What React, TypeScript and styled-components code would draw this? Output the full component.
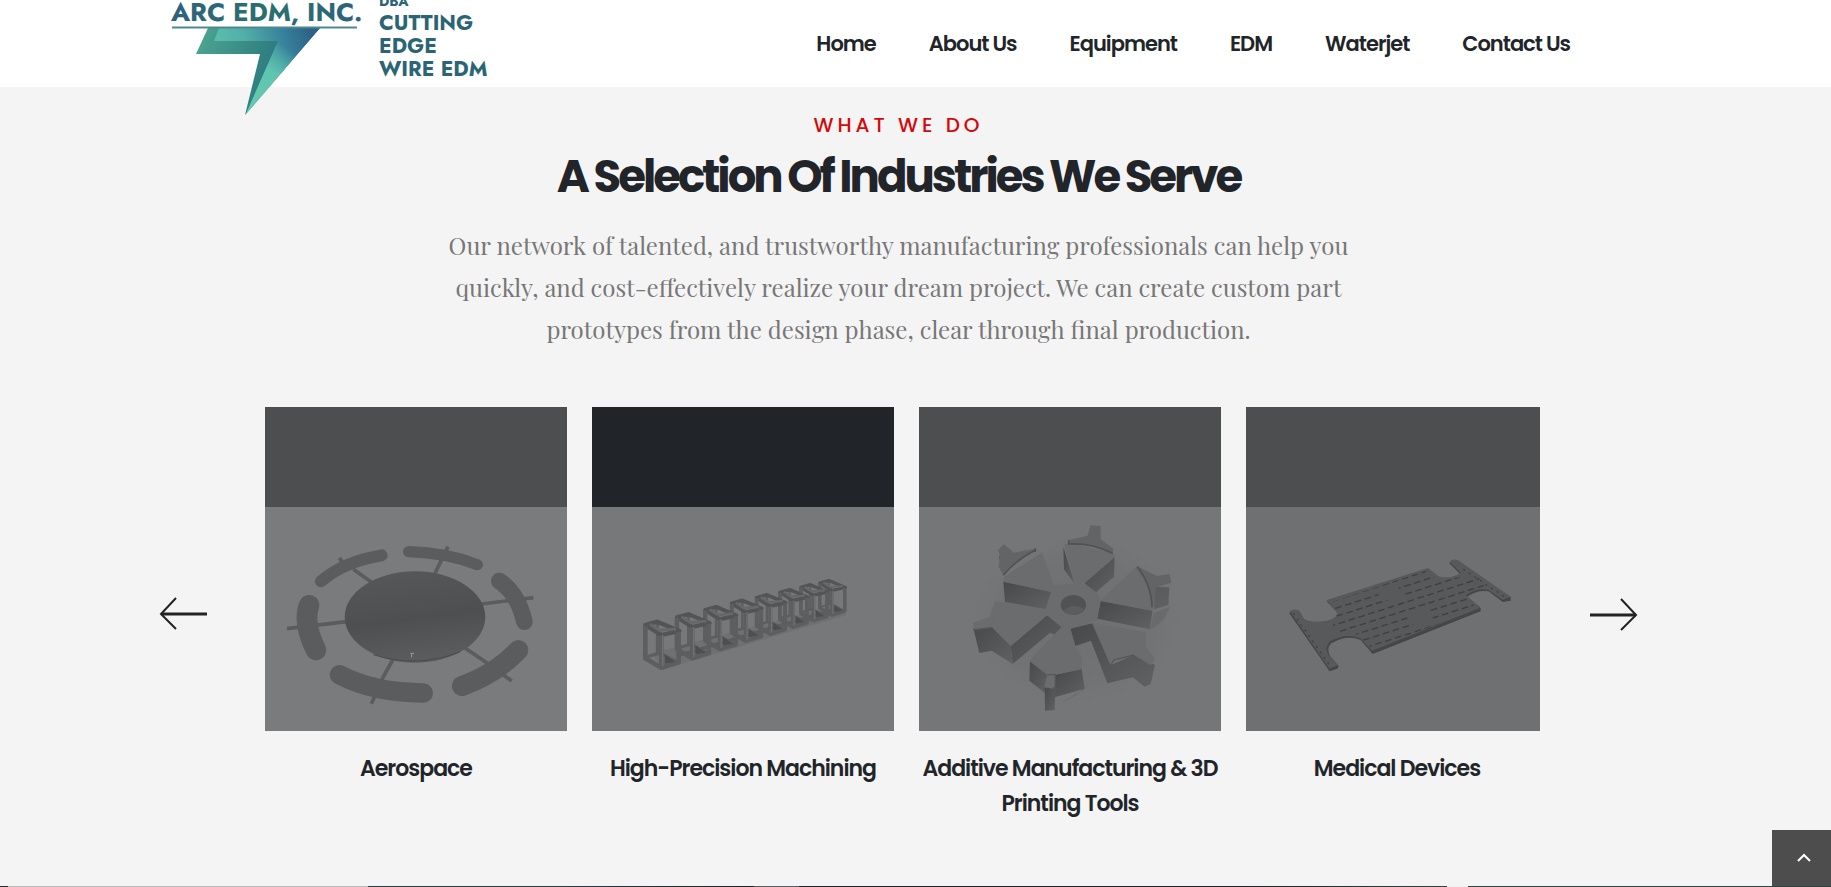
import React from "react";
import styled, { createGlobalStyle } from "styled-components";

const GlobalStyle = createGlobalStyle`
  *, *::before, *::after { box-sizing: border-box; }
  body {
    margin: 0;
    background: #f4f4f4;
    color: #212529;
    font-family: Poppins, Inter, "Liberation Sans", sans-serif;
    overflow-x: hidden;
  }
`;

const Header = styled.header`
  position: relative;
  z-index: 2;
  height: 87px;
  padding-right: 34px;
  background: #fff;
`;

const HeaderInner = styled.div`
  display: flex;
  align-items: flex-start;
  justify-content: space-between;
  max-width: 1479px;
  height: 100%;
  margin: 0 auto;
`;

const LogoLink = styled.a`
  flex: none;
  width: 340px;
  height: 120px;
  svg { display: block; }
`;

const Nav = styled.nav`
  display: flex;
  gap: 53px;
  padding-right: 68px;
`;

const NavLink = styled.a`
  color: #212529;
  font-size: 21px;
  font-weight: 600;
  line-height: 88px;
  letter-spacing: -1px;
  text-decoration: none;
  white-space: nowrap;
`;

const Section = styled.section`
  padding: 23px 34px 65px 0;
`;

const Intro = styled.div`
  max-width: 930px;
  margin: 0 auto;
  text-align: center;
`;

const Eyebrow = styled.p`
  margin: 0;
  color: #d30a0a;
  font-size: 20px;
  font-weight: 500;
  line-height: 30px;
  letter-spacing: 4px;
  text-transform: uppercase;
`;

const Heading = styled.h2`
  margin: 10px 0 0;
  font-size: 45px;
  font-weight: 700;
  line-height: 54px;
  letter-spacing: -3px;
`;

const Lead = styled.p`
  margin: 20px 0 0;
  color: #777;
  font-family: "Playfair Display", "Liberation Serif", serif;
  font-size: 24px;
  line-height: 42px;
`;

const Carousel = styled.div`
  display: flex;
  align-items: center;
  max-width: 1479px;
  margin: 57px auto 0;
`;

const ArrowButton = styled.button`
  flex: none;
  display: block;
  width: 48px;
  height: 34px;
  padding: 0;
  border: 0;
  background: none;
  cursor: pointer;
  svg { display: block; }
`;

const Track = styled.ul`
  flex: 1;
  display: flex;
  gap: 25px;
  min-width: 0;
  margin: 0 50px 0 58px;
  padding: 0;
  overflow: hidden;
  list-style: none;
`;

const Slide = styled.li`
  flex: 0 0 calc((100% - 67px) / 4);
`;

const Frame = styled.div<{ $active?: boolean }>`
  padding-top: 100px;
  background: ${(p) => (p.$active ? "#212529" : "#4d4e50")};
  svg { display: block; width: 100%; height: 224px; }
`;

const SlideTitle = styled.h3`
  margin: 20px 0 0;
  font-size: 22px;
  font-weight: 600;
  line-height: 35px;
  letter-spacing: -1px;
  text-align: center;
`;

const Gallery = styled.section`
  height: 1px;
  background: linear-gradient(
    to right,
    #222d30 8px, #b9b9b9 8px 368px, #2b3c40 368px 560px, #1f2022 754px,
    #595d62 754px 799px, #202226 799px 1250px, #33413f 1447px,
    #f0f0f0 1447px 1468px, #33413f 1468px
  );
`;

const TopButton = styled.button`
  position: fixed;
  right: 0;
  bottom: 1px;
  display: flex;
  align-items: center;
  justify-content: center;
  width: 59px;
  height: 56px;
  padding: 0 0 0 4px;
  border: 0;
  background: #4d4d4d;
  cursor: pointer;
`;

function Logo() {
  return (
    <svg width="340" height="120" viewBox="159 0 340 120" aria-hidden="true">
      <defs>
        <linearGradient id="ink" x1="0" x2="1">
          <stop offset="0" stopColor="#2d6180" />
          <stop offset=".5" stopColor="#2b706d" />
          <stop offset="1" stopColor="#2d6180" />
        </linearGradient>
        <linearGradient id="light" gradientUnits="userSpaceOnUse" x1="214" y1="60" x2="310" y2="30">
          <stop offset="0" stopColor="#5cc0ae" />
          <stop offset=".35" stopColor="#52b0a8" />
          <stop offset=".75" stopColor="#367f9a" />
          <stop offset="1" stopColor="#2c6288" />
        </linearGradient>
        <linearGradient id="tip" gradientUnits="userSpaceOnUse" x1="290" y1="50" x2="250" y2="110">
          <stop offset="0" stopColor="#5fc5b0" stopOpacity="0" />
          <stop offset=".4" stopColor="#5fc5b0" />
          <stop offset="1" stopColor="#66c9b0" />
        </linearGradient>
        <linearGradient id="dark" gradientUnits="userSpaceOnUse" x1="200" y1="40" x2="275" y2="60">
          <stop offset="0" stopColor="#4ba38f" />
          <stop offset="1" stopColor="#2e7b80" />
        </linearGradient>
      </defs>
      <path d="M208 28H320L245 115L260 54H196Z" fill="url(#dark)" />
      <path d="M219 28H320L246 114L278 41H214Z" fill="url(#light)" />
      <path d="M278 41L300 51L246 114Z" fill="url(#tip)" />
      <path d="M172 27.5H357" stroke="#4f8790" strokeWidth="2" />
      <g fill="url(#ink)" fontFamily="Jost, Lato, sans-serif" fontWeight="700">
        <text x="171" y="21" fontSize="26">ARC EDM, INC.</text>
        <g fontSize="21" fill="#2b6575">
          <text x="379" y="6" fontSize="14">DBA</text>
          <text x="379" y="30">CUTTING</text>
          <text x="379" y="53">EDGE</text>
          <text x="379" y="76">WIRE EDM</text>
        </g>
      </g>
    </svg>
  );
}

function AerospacePart() {
  return (
    <svg viewBox="375 321 906 672" preserveAspectRatio="xMidYMid slice" role="img" aria-label="Disc with six curved arms">
      <defs>
        <linearGradient id="disc" x1="0" y1="0" x2="0.2" y2="1">
          <stop offset="0" stopColor="#565859" />
          <stop offset=".6" stopColor="#4e4f50" />
          <stop offset="1" stopColor="#5a5b5c" />
        </linearGradient>
      </defs>
      <path d="M375 321H1281V993H375Z" fill="#7a7b7c" />
      <g stroke="#5a5c5d" strokeWidth="11" fill="none">
        <path d="M441 686L620 665M598 474L612 492M640 508L695 547M924 440L884 522M1025 612L1180 593M975 744L1050 795M1090 825L1115 843M758 780L722 845M706 885L694 911" />
      </g>
      <g stroke="#5a5c5d" fill="none" strokeLinecap="round">
        <path d="M543 544Q610 485 725 466" strokeWidth="36" />
        <path d="M806 455Q920 458 1012 494" strokeWidth="34" />
        <path d="M1078 543Q1134 580 1153 665" strokeWidth="50" />
        <path d="M1135 750Q1070 820 966 858" strokeWidth="60" />
        <path d="M598 824Q700 878 850 879" strokeWidth="58" />
        <path d="M507 616Q488 670 528 750" strokeWidth="62" />
      </g>
      <ellipse cx="825" cy="651" rx="211" ry="137" fill="url(#disc)" />
      <path d="M700 764Q830 806 960 756" stroke="#4a4b4c" strokeWidth="3" fill="none" />
      <path d="M811 760H822M815 762V772" stroke="#999" strokeWidth="3" />
    </svg>
  );
}

const cageFrames = [
  [190, 675, 1], [285, 652, 0.96], [370, 630, 0.92], [450, 610, 0.88],
  [525, 593, 0.85], [595, 577, 0.81], [658, 562, 0.78], [715, 549, 0.75],
];

function MachinedPart() {
  return (
    <svg viewBox="36 321 906 672" preserveAspectRatio="xMidYMid slice" role="img" aria-label="Row of open machined cages">
      <path d="M36 321H942V993H36Z" fill="#777879" />
      <path d="M250 808L800 645L770 615L215 760Z" fill="#6e7071" />
      <path d="M300 765L775 625" stroke="#5b5d5e" strokeWidth="10" />
      <g fill="none" strokeLinejoin="round">
        {[...cageFrames].reverse().map(([x, y, s]) => (
          <g key={x} transform={`translate(${x} ${y}) scale(${s})`}>
            <path d="M8 96L50 84L104 112M42 -8V84" stroke="#5c5e5f" strokeWidth="9" />
            <path d="M6 0L42 -10L108 18L54 30Z" stroke="#525455" strokeWidth="13" />
            <path d="M20 -2L48 16L98 12" stroke="#66686a" strokeWidth="9" />
            <path d="M6 2V100L54 128L106 112V20M54 32V128" stroke="#5c5e5f" strokeWidth="14" />
            <path d="M64 88L96 110L64 116Z" fill="#4c4e4f" />
            <path d="M58 30V124" stroke="#707273" strokeWidth="4" />
          </g>
        ))}
      </g>
    </svg>
  );
}

function AdditivePart() {
  return (
    <svg viewBox="27 321 906 672" preserveAspectRatio="xMidYMid slice" role="img" aria-label="Hub with seven wedge blades">
      <defs>
        <linearGradient id="side" x1="0" y1="0" x2="1" y2="1">
          <stop offset="0" stopColor="#48494a" />
          <stop offset="1" stopColor="#606162" />
        </linearGradient>
        <radialGradient id="shade">
          <stop offset="0" stopColor="#5f6061" />
          <stop offset=".7" stopColor="#6a6b6c" />
          <stop offset="1" stopColor="#757677" stopOpacity="0" />
        </radialGradient>
      </defs>
      <path d="M27 321H933V993H27Z" fill="#757677" />
      <ellipse cx="500" cy="660" rx="340" ry="270" fill="url(#shade)" opacity=".3" />
      <path d="M730 640L780 620L760 660L722 690ZM520 870L535 850L500 885L440 915Z" fill="#686a6b" />
      <g fill="url(#side)">
        <path d="M280 545L424 575L407 628L285 606Z" />
        <path d="M523 550L614 470L612 530L556 578Z" />
        <path d="M460 440L494 552L462 508Z" />
        <path d="M572 603L727 632L720 688L562 656Z" />
        <path d="M411 646L460 682L440 706L420 698L308 792L302 738Z" />
        <path d="M190 685L245 680L302 738L308 792L245 752L208 759Z" />
        <path d="M480 686L548 670L602 795L672 765L735 795L722 852L704 860L668 832L592 850L543 722L496 738Z" />
        <path d="M360 784L412 824L404 878L358 842Z" />
        <path d="M436 824L515 808L524 866L434 892Z" />
        <path d="M404 860L436 862L434 930L405 932Z" />
        <path d="M266 468L300 490L282 520ZM735 560L778 562L775 615L732 628Z" />
      </g>
      <g fill="#6a6c6d">
        <path d="M430 555L522 550L562 578L572 603L560 660L482 686L455 682L411 646L407 628L424 575Z" />
        <path d="M282 530L396 458L434 562L424 576L280 545Z" />
        <path d="M462 434L480 430L610 458L614 472L523 550L496 552Z" />
        <path d="M570 602L672 506L684 500L722 560L727 632Z" />
        <path d="M256 603L411 628L411 646L302 738L245 680L240 648Z" />
        <path d="M188 668L238 652L256 603L262 612L247 682L194 690Z" />
        <path d="M460 676L482 688L496 738L516 770L515 806L436 824L428 866L402 862L412 824L358 782Z" />
        <path d="M546 670L708 696L706 738L735 776L722 796L672 765L612 780L602 796Z" />
      </g>
      <g fill="#626465">
        <path d="M264 450L282 433L312 458L376 446L374 454Q320 480 280 526L266 500L270 468Z" />
        <path d="M476 420L532 408L542 376L572 378L572 418L610 446L608 460Q545 430 476 434Z" />
        <path d="M680 498L740 528L778 522L784 548L738 562L728 632Q724 560 680 506Z" />
      </g>
      <g fill="none" stroke="#505253" strokeWidth="5">
        <path d="M476 432Q545 428 608 460M280 526Q315 482 376 450M682 500Q725 555 726 622M476 420V434M376 444V456" />
      </g>
      <path d="M190 690L247 682M412 824L436 824L434 892M602 795L612 780L672 765" fill="none" stroke="#565859" strokeWidth="4" />
      <ellipse cx="490" cy="615" rx="38" ry="30" fill="#515253" />
      <path d="M460 632Q490 606 524 628Q490 660 460 632Z" fill="#5c5d5e" />
    </svg>
  );
}

const slotRows = [0, 1, 2, 3, 4, 5, 6, 7];

function MedicalPart() {
  return (
    <svg viewBox="48 321 906 672" preserveAspectRatio="xMinYMid slice" role="img" aria-label="Slotted plate with end tabs">
      <defs>
        <clipPath id="plate">
          <path d="M300 608L585 512L625 540L740 525L770 570L712 595L742 626L428 748L375 700L290 725L235 690L320 650Z" />
        </clipPath>
      </defs>
      <path d="M48 321H954V993H48Z" fill="#6f7071" />
      <path
        d="M178 640Q182 628 206 632L222 658Q240 672 290 664Q320 658 324 640L290 604L594 508L626 532Q660 542 690 522L658 490Q664 476 684 482L842 592L842 602L818 606L776 574Q742 568 712 590L752 624L752 634L428 762L392 720Q350 702 304 730Q288 744 300 768L326 798L322 806L298 814L292 804Z"
        fill="#444647"
      />
      <path
        d="M180 634Q190 624 208 632L222 656Q240 670 290 662Q320 656 322 638L290 600L594 504L628 530Q664 538 692 518L660 486Q670 474 686 482L842 590L818 600L776 570Q738 562 708 586L750 624L426 752L390 714Q350 698 300 724Q282 742 296 766L324 796L298 806Z"
        fill="#58595a"
      />
      <g clipPath="url(#plate)" stroke="#3d3f40" strokeWidth="4" strokeDasharray="20 11" fill="none">
        {slotRows.map((r) => (
          <path key={r} d={`M${250 + r * 20} ${622 + r * 18}l470 -150`} strokeDashoffset={r % 2 ? 14 : 0} />
        ))}
      </g>
      <path d="M440 578L500 552L520 590L470 602ZM520 640L590 618L612 660L552 676Z" fill="#58595a" />
      <path d="M190 640L300 798M700 508L826 592" stroke="#3f4142" strokeWidth="4" strokeDasharray="6 14" />
    </svg>
  );
}

const navItems = ["Home", "About Us", "Equipment", "EDM", "Waterjet", "Contact Us"];

const industries = [
  { title: "Aerospace", Art: AerospacePart },
  { title: "High-Precision Machining", Art: MachinedPart, active: true },
  { title: "Additive Manufacturing & 3D Printing Tools", Art: AdditivePart },
  { title: "Medical Devices", Art: MedicalPart },
];

export default function App() {
  return (
    <>
      <GlobalStyle />
      <Header>
        <HeaderInner>
          <LogoLink href="#home" aria-label="Arc EDM, Inc. home">
            <Logo />
          </LogoLink>
          <Nav aria-label="Main">
            {navItems.map((item) => (
              <NavLink key={item} href={`#${item.toLowerCase().replace(" ", "-")}`}>{item}</NavLink>
            ))}
          </Nav>
        </HeaderInner>
      </Header>
      <main>
        <Section>
          <Intro>
            <Eyebrow>What We Do</Eyebrow>
            <Heading>A Selection Of Industries We Serve</Heading>
            <Lead>
              Our network of talented, and trustworthy manufacturing professionals can help you
              quickly, and cost-effectively realize your dream project. We can create custom part
              prototypes from the design phase, clear through final production.
            </Lead>
          </Intro>
          <Carousel>
            <ArrowButton type="button" aria-label="Previous">
              <svg width="48" height="34" fill="none" stroke="#222">
                <path d="M2 17H48" strokeWidth="3" />
                <path d="M17 1L2 17L17 32" strokeWidth="2" />
              </svg>
            </ArrowButton>
            <Track>
              {industries.map(({ title, Art, active }) => (
                <Slide key={title}>
                  <Frame $active={active}>
                    <Art />
                  </Frame>
                  <SlideTitle>{title}</SlideTitle>
                </Slide>
              ))}
            </Track>
            <ArrowButton type="button" aria-label="Next">
              <svg width="48" height="34" fill="none" stroke="#222">
                <path d="M0 18H46" strokeWidth="3" />
                <path d="M31 2L46 18L31 33" strokeWidth="2" />
              </svg>
            </ArrowButton>
          </Carousel>
        </Section>
        <Gallery aria-label="Gallery" />
      </main>
      <TopButton type="button" aria-label="Back to top">
        <svg width="14" height="10" fill="none" stroke="#fff" strokeWidth="2">
          <path d="M1 8L7 2L13 8" />
        </svg>
      </TopButton>
    </>
  );
}
